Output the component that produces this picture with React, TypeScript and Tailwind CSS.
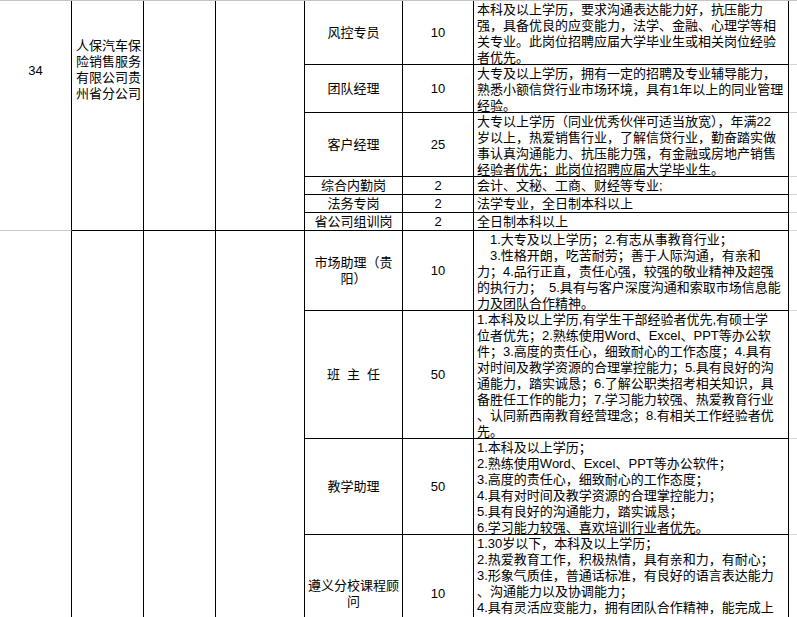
import React, { Fragment } from "react";

type Line = React.ReactNode;
type Row = { pos: Line[]; count: string; desc: Line[]; single?: boolean; spaced?: boolean };

const rowStart = [
  "row-start-1",
  "row-start-2",
  "row-start-3",
  "row-start-4",
  "row-start-5",
  "row-start-6",
  "row-start-7",
  "row-start-8",
  "row-start-9",
  "row-start-10",
];

const rows: Row[] = [
  {
    pos: ["风控专员"],
    count: "10",
    desc: [
      "本科及以上学历，要求沟通表达能力好，抗压能力",
      "强，具备优良的应变能力，法学、金融、心理学等相",
      "关专业。此岗位招聘应届大学毕业生或相关岗位经验",
      "者优先。",
    ],
  },
  {
    pos: ["团队经理"],
    count: "10",
    desc: [
      "大专及以上学历，拥有一定的招聘及专业辅导能力，",
      "熟悉小额信贷行业市场环境，具有1年以上的同业管理",
      "经验。",
    ],
  },
  {
    pos: ["客户经理"],
    count: "25",
    desc: [
      "大专以上学历（同业优秀伙伴可适当放宽），年满22",
      "岁以上，热爱销售行业，了解信贷行业，勤奋踏实做",
      "事认真沟通能力、抗压能力强，有金融或房地产销售",
      "经验者优先；此岗位招聘应届大学毕业生。",
    ],
  },
  { pos: ["综合内勤岗"], count: "2", desc: ["会计、文秘、工商、财经等专业;"], single: true },
  { pos: ["法务专岗"], count: "2", desc: ["法学专业，全日制本科以上"], single: true },
  { pos: ["省公司组训岗"], count: "2", desc: ["全日制本科以上"], single: true },
  {
    pos: ["市场助理（贵", "阳）"],
    count: "10",
    desc: [
      <span className="ml-[13px]">1.大专及以上学历；2.有志从事教育行业；</span>,
      <span className="ml-[13px]">3.性格开朗，吃苦耐劳；善于人际沟通，有亲和</span>,
      "力；4.品行正直，责任心强，较强的敬业精神及超强",
      <>
        <span>的执行力；</span>
        <span className="ml-[7px]">5.具有与客户深度沟通和索取市场信息能</span>
      </>,
      "力及团队合作精神。",
    ],
  },
  {
    pos: ["班", "主", "任"],
    spaced: true,
    count: "50",
    desc: [
      "1.本科及以上学历,有学生干部经验者优先,有硕士学",
      "位者优先；2.熟练使用Word、Excel、PPT等办公软",
      "件；3.高度的责任心，细致耐心的工作态度；4.具有",
      "对时间及教学资源的合理掌控能力；5.具有良好的沟",
      "通能力，踏实诚恳；6.了解公职类招考相关知识，具",
      "备胜任工作的能力；7.学习能力较强、热爱教育行业",
      "、认同新西南教育经营理念；8.有相关工作经验者优",
      "先。",
    ],
  },
  {
    pos: ["教学助理"],
    count: "50",
    desc: [
      "1.本科及以上学历；",
      "2.熟练使用Word、Excel、PPT等办公软件；",
      "3.高度的责任心，细致耐心的工作态度；",
      "4.具有对时间及教学资源的合理掌控能力；",
      "5.具有良好的沟通能力，踏实诚恳；",
      "6.学习能力较强、喜欢培训行业者优先。",
    ],
  },
  {
    pos: ["遵义分校课程顾", "问"],
    count: "10",
    desc: [
      "1.30岁以下，本科及以上学历；",
      "2.热爱教育工作，积极热情，具有亲和力，有耐心；",
      "3.形象气质佳，普通话标准，有良好的语言表达能力",
      "、沟通能力以及协调能力；",
      "4.具有灵活应变能力，拥有团队合作精神，能完成上",
    ],
  },
];

export default function App() {
  return (
    <div className="w-[797px] h-[617px] overflow-hidden bg-white text-black font-['Liberation_Sans','Noto_Sans_CJK_SC',sans-serif] text-[13px] leading-[16px]">
      <div className="grid grid-cols-[72px_72px_72px_89px_98px_71px_315px_1fr] grid-rows-[64px_48px_64px_18px_18px_18px_80px_128px_96px_118px] border-t border-t-[#c4c4c4]">
        {/* column 1 */}
        <div className="col-start-1 row-start-1 row-span-6 border-r border-r-black border-b border-b-[#c8c8c8] pt-[62px] text-center">
          34
        </div>
        <div className="col-start-1 row-start-7 row-span-4 border-r border-r-black" />

        {/* column 2 */}
        <div className="col-start-2 row-start-1 row-span-6 border-r border-b border-black pt-[37px] pl-[4px] whitespace-nowrap">
          <div>人保汽车保</div>
          <div>险销售服务</div>
          <div>有限公司贵</div>
          <div>州省分公司</div>
        </div>
        <div className="col-start-2 row-start-7 row-span-4 border-r border-black" />

        {/* column 3 */}
        <div className="col-start-3 row-start-1 row-span-6 border-r border-b border-black" />
        <div className="col-start-3 row-start-7 row-span-4 border-r border-black" />

        {/* column 4 */}
        <div className="col-start-4 row-start-1 row-span-6 border-r border-b border-black" />
        <div className="col-start-4 row-start-7 row-span-4 border-r border-black" />

        {rows.map((r, i) => (
          <Fragment key={i}>
            <div
              className={`col-start-5 ${rowStart[i]} border-r border-b border-black flex items-center justify-center text-center whitespace-nowrap pt-[1px]`}
            >
              {r.spaced ? (
                <div className="flex gap-[7px]">
                  {r.pos.map((p, j) => (
                    <span key={j}>{p}</span>
                  ))}
                </div>
              ) : (
                <div>
                  {r.pos.map((p, j) => (
                    <div key={j}>{p}</div>
                  ))}
                </div>
              )}
            </div>
            <div
              className={`col-start-6 ${rowStart[i]} border-r border-b border-black flex items-center justify-center pt-[1px]`}
            >
              {r.count}
            </div>
            <div
              className={`col-start-7 ${rowStart[i]} border-r border-b border-black pl-[3px] whitespace-nowrap ${
                r.single ? "flex flex-col justify-end" : "pt-[1px]"
              }`}
            >
              {r.desc.map((d, j) => (
                <div key={j}>{d}</div>
              ))}
            </div>
            <div className={`col-start-8 ${rowStart[i]} border-b border-b-[#d4d4d4]`} />
          </Fragment>
        ))}
      </div>
    </div>
  );
}
